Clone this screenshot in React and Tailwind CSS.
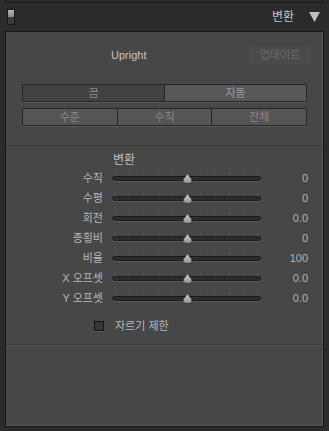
const sliders = [
  { label: '수직', value: '0' },
  { label: '수평', value: '0' },
  { label: '회전', value: '0.0' },
  { label: '종횡비', value: '0' },
  { label: '비율', value: '100' },
  { label: 'X 오프셋', value: '0.0' },
  { label: 'Y 오프셋', value: '0.0' },
];

const ticks = Array.from({ length: 11 }, (_, i) => i);

function Slider({ label, value }) {
  return (
    <div className="flex h-[20px] items-center">
      <div className="w-[97px] text-right text-[11px] text-[#b8b8b8]">{label}</div>
      <div className="relative ml-[9px] h-[20px] w-[149px]">
        {/* ticks */}
        <div className="absolute left-[3px] right-[3px] top-[5px] flex justify-between">
          {ticks.map((t) => (
            <div key={t} className="h-[2px] w-px bg-[#5e5e5e]" />
          ))}
        </div>
        {/* track */}
        <div className="absolute left-0 right-0 top-[8px] h-[5px] rounded-full border border-[#1c1c1c] bg-[#2c2c2c] shadow-[0_1px_0_#5a5a5a]" />
        {/* thumb */}
        <svg className="absolute left-[70px] top-[5px]" width="11" height="11" viewBox="0 0 11 11">
          <defs>
            <linearGradient id="th" x1="0" y1="0" x2="0" y2="1">
              <stop offset="0" stopColor="#d0d0d0" />
              <stop offset="1" stopColor="#8e8e8e" />
            </linearGradient>
          </defs>
          <path d="M5.5 0.5 L8 4 Q10.5 6 10 8.5 Q9.5 10.5 5.5 10.5 Q1.5 10.5 1 8.5 Q0.5 6 3 4 Z" fill="url(#th)" stroke="#2a2a2a" strokeWidth="0.8" />
        </svg>
      </div>
      <div className="w-[47px] text-right text-[11px] text-[#b4b4b4]">{value}</div>
    </div>
  );
}

export default function App() {
  return (
    <div className="flex h-[431px] w-[329px] flex-col bg-[#2b2b2b] font-['Liberation_Sans','Noto_Sans_CJK_KR',sans-serif]">
      {/* previous panel edge */}
      <div className="mx-[5px] h-[3px] border-x border-b border-[#181818]" />

      {/* Header */}
      <div className="flex h-[28px] items-center pl-[7px] pr-[9px]">
        <div className="flex h-[16px] w-[8px] flex-col overflow-hidden rounded-[1px] border border-[#151515]">
          <div className="h-1/2 bg-gradient-to-b from-[#b8b8b8] to-[#8a8a8a]" />
          <div className="h-1/2 bg-[#3c3c3c]" />
        </div>
        <div className="ml-auto text-[12px] text-[#c4c4c4]">변환</div>
        <svg className="ml-[15px]" width="11" height="10" viewBox="0 0 11 10">
          <path d="M0 0 H11 L5.5 10 Z" fill="#bdbdbd" />
        </svg>
      </div>

      {/* Panel */}
      <div className="mx-[5px] flex h-[396px] flex-col border border-[#151515] bg-[#474747] shadow-[inset_-1px_-1px_0_#585858]">
        {/* Upright section */}
        <div className="flex flex-col border-b border-[#3b3b3b] px-[16px] pb-[19px] pt-[13px]">
          <div className="flex h-[20px] items-center">
            <div className="ml-[89px] text-[11px] text-[#c6c6c6]">Upright</div>
            <div className="ml-auto mr-[-4px] flex h-[17px] w-[62px] items-center justify-center rounded-[4px] bg-[#4b4b4b] text-[11px] text-[#6c6c6c]">
              업데이트
            </div>
          </div>

          <div className="mt-[19px] flex h-[18px] border border-[#262626] shadow-[0_1px_0_#595959]">
            <div className="flex flex-1 items-center justify-center bg-[#424242] text-[11px] text-[#8c8c8c]">끔</div>
            <div className="flex flex-1 items-center justify-center border-l border-[#262626] bg-[#585858] text-[11px] text-[#9c9c9c]">
              자동
            </div>
          </div>

          <div className="mt-[6px] flex h-[18px] border border-[#262626] shadow-[0_1px_0_#595959]">
            <div className="flex flex-1 items-center justify-center bg-[#555555] text-[11px] text-[#8a8a8a]">수준</div>
            <div className="flex flex-1 items-center justify-center border-l border-[#262626] bg-[#555555] text-[11px] text-[#8a8a8a]">
              수직
            </div>
            <div className="flex flex-1 items-center justify-center border-l border-[#262626] bg-[#555555] text-[11px] text-[#8a8a8a]">
              전체
            </div>
          </div>
        </div>

        {/* Transform sliders */}
        <div className="flex flex-col border-b border-[#3b3b3b] pb-[8px] pt-[6px] shadow-[0_1px_0_#4e4e4e]">
          <div className="ml-[107px] flex h-[16px] items-center text-[12px] text-[#c0c0c0]">변환</div>
          {sliders.map((s) => (
            <Slider key={s.label} {...s} />
          ))}
          <div className="mt-[8px] flex h-[20px] items-center pl-[88px]">
            <div className="h-[10px] w-[10px] border border-[#151515] bg-[#363636] shadow-[0_1px_0_#5a5a5a]" />
            <div className="ml-[11px] text-[11px] text-[#b8b8b8]">자르기 제한</div>
          </div>
        </div>
      </div>
    </div>
  );
}
